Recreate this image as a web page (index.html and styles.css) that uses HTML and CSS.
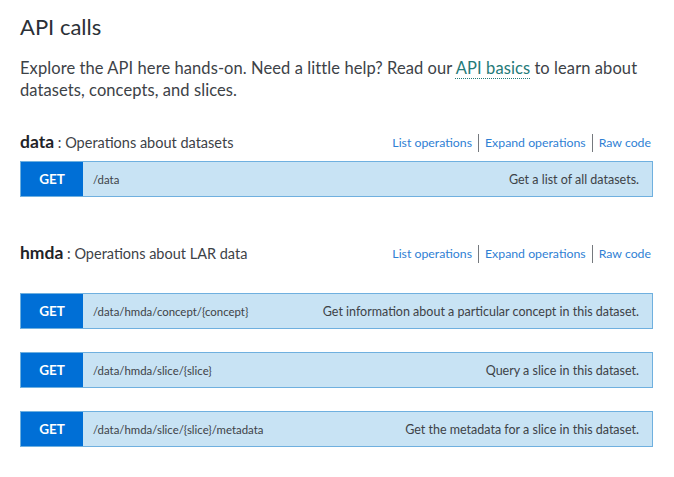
FILE: index.html
```html
<!DOCTYPE html>
<html lang="en">
<head>
<meta charset="utf-8">
<title>API calls</title>
<link rel="stylesheet" href="styles.css">
</head>
<body>
<main class="page">
  <h1 class="title">API calls</h1>
  <p class="intro">Explore the API here hands-on. Need a little help? Read our <a class="basics" href="#">API basics</a> to learn about datasets, concepts, and slices.</p>

  <section class="group group-data">
    <div class="group-head">
      <h2 class="group-name"><strong>data</strong> : Operations about datasets</h2>
      <nav class="group-links">
        <a href="#">List operations</a><span class="sep"></span><a href="#">Expand operations</a><span class="sep"></span><a href="#">Raw code</a>
      </nav>
    </div>
    <ul class="ops">
      <li class="op"><span class="method">GET</span><span class="path">/data</span><span class="desc">Get a list of all datasets.</span></li>
    </ul>
  </section>

  <section class="group group-hmda">
    <div class="group-head">
      <h2 class="group-name"><strong>hmda</strong> : Operations about LAR data</h2>
      <nav class="group-links">
        <a href="#">List operations</a><span class="sep"></span><a href="#">Expand operations</a><span class="sep"></span><a href="#">Raw code</a>
      </nav>
    </div>
    <ul class="ops">
      <li class="op"><span class="method">GET</span><span class="path">/data/hmda/concept/{concept}</span><span class="desc">Get information about a particular concept in this dataset.</span></li>
      <li class="op"><span class="method">GET</span><span class="path">/data/hmda/slice/{slice}</span><span class="desc">Query a slice in this dataset.</span></li>
      <li class="op"><span class="method">GET</span><span class="path">/data/hmda/slice/{slice}/metadata</span><span class="desc">Get the metadata for a slice in this dataset.</span></li>
    </ul>
  </section>
</main>
</body>
</html>
```

FILE: styles.css
```css
* { box-sizing: border-box; }
html, body { margin: 0; padding: 0; background: #fff; }
body {
  font-family: Lato, "Open Sans", "Liberation Sans", sans-serif;
  color: #3d4247;
}
.page {
  width: 633px;
  margin-left: 20px;
  padding-top: 13px;
}
.title {
  margin: 0;
  font-size: 22px;
  line-height: 28px;
  font-weight: 400;
  color: #2b3036;
}
.intro {
  margin: 16px 0 0;
  font-size: 16.5px;
  letter-spacing: 0.08px;
  line-height: 22px;
  color: #3d4247;
}
.basics {
  color: #257a78;
  text-decoration: underline dotted #257a78;
  text-decoration-thickness: 1px;
  text-underline-offset: 4px;
}
.group-head {
  display: flex;
  justify-content: space-between;
  align-items: center;
}
.group-data { margin-top: 31px; }
.group-hmda { margin-top: 46px; }
.group-name {
  margin: 0;
  font-size: 14.5px;
  line-height: 20px;
  font-weight: 400;
  color: #3d4247;
}
.group-name strong {
  font-size: 17.5px;
  font-weight: 700;
  color: #1f2328;
}
.group-links {
  display: flex;
  align-items: center;
  font-size: 12.3px;
  padding-right: 2px;
}
.group-links a {
  color: #2f7fd4;
  text-decoration: none;
}
.sep {
  width: 1px;
  height: 18px;
  background: #75797e;
  margin: 0 6px;
}
.ops {
  list-style: none;
  margin: 0;
  padding: 0;
  display: flex;
  flex-direction: column;
  gap: 23px;
}
.group-data .ops { margin-top: 8px; }
.group-hmda .ops { margin-top: 29px; }
.op {
  display: flex;
  align-items: center;
  height: 36px;
  background: #c8e3f4;
  border: 1px solid #6fb0df;
}
.method {
  align-self: stretch;
  width: 62px;
  display: flex;
  align-items: center;
  justify-content: center;
  background: #006fd6;
  color: #fff;
  font-weight: 700;
  font-size: 13.5px;
}
.path {
  padding-left: 10px;
  font-size: 11.4px;
  color: #3d4247;
}
.desc {
  margin-left: auto;
  padding-right: 13px;
  font-size: 12.5px;
  color: #3d4247;
}
```
